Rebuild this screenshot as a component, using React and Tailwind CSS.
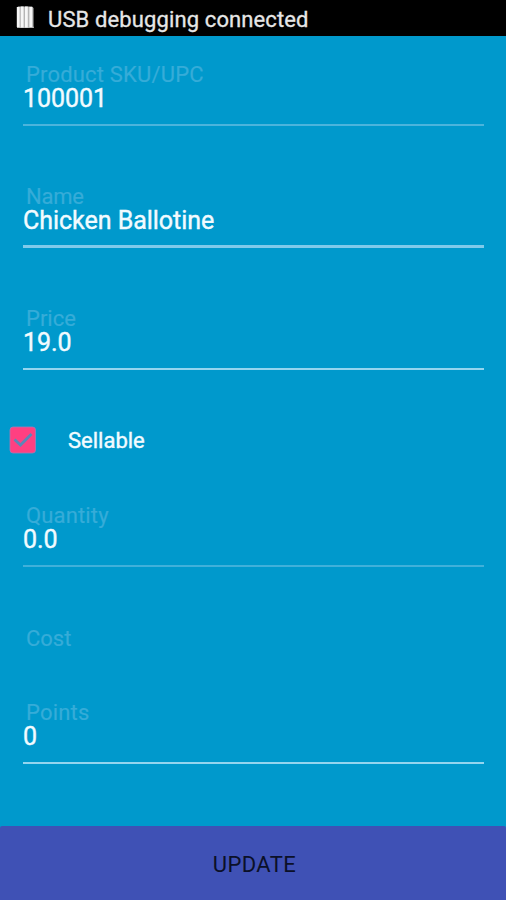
import React, { useState } from 'react';

const fields = [
  { name: 'sku', label: 'Product SKU/UPC', className: 'mt-[26px]', line: 'mt-[14px] h-[2px] bg-[#4bb4dc]', labelSize: 'tracking-[0.18px]' },
  { name: 'name', label: 'Name', className: 'mt-[58px]', line: 'mt-[13px] h-[3px] bg-[#80caea]', labelSize: 'tracking-[-0.2px]' },
  { name: 'price', label: 'Price', className: 'mt-[58px]', line: 'mt-[14px] h-[2px] bg-[#94d5ef]', labelSize: 'tracking-[0px]' },
];

const stockFields = [
  { name: 'quantity', label: 'Quantity', className: 'mt-[49px]', line: 'mt-[14px] h-[2px] bg-[#40b0da]', labelSize: 'tracking-[0.15px]' },
  { name: 'cost', label: 'Cost', className: 'mt-[59px]', labelSize: 'tracking-[0px]' },
  { name: 'points', label: 'Points', className: 'mt-[50px]', line: 'mt-[14px] h-[2px] bg-[#94d5ef]', labelSize: 'tracking-[0.2px]' },
];

const StatusBar = () => (
  <div className="flex h-9 shrink-0 items-center bg-black pl-4">
    <svg className="-mt-[2px] h-[24px] w-[20px] shrink-0" viewBox="0 0 20 24">
      <path d="M1 3 L2 1.5 H16 L17.5 3 V21 L18 23 H1 Z" fill="#b5b5b5" />
      <path d="M2.2 2V22M6.2 1.5V22.5M10.4 1.5V22.5M14.8 2V22" stroke="#f6f6f6" strokeWidth="2.8" />
    </svg>
    <span className="ml-[12px] mt-[3px] whitespace-nowrap text-[22px] leading-6 tracking-[0.12px] text-[#e6e6e6] [-webkit-text-stroke:0.3px]">
      USB debugging connected
    </span>
  </div>
);

const Field = ({ field, value, onChange }) => (
  <div className={`ml-[23px] mr-[22px] flex flex-col ${field.className}`}>
    <label htmlFor={field.name} className={`h-6 pl-[3px] pt-px text-[22px] leading-6 text-[#36acd8] [-webkit-text-stroke:0.2px] ${field.labelSize}`}>
      {field.label}
    </label>
    {field.line && (
      <>
        <input
          id={field.name}
          value={value}
          onChange={e => onChange(field.name, e.target.value)}
          className="h-6 w-full bg-transparent p-0 text-[25px] leading-6 tracking-[-0.03px] text-[#f2fbff] outline-none [-webkit-text-stroke:0.4px]"
        />
        <div className={field.line} />
      </>
    )}
  </div>
);

const App = () => {
  const [sellable, setSellable] = useState(true);
  const [product, setProduct] = useState({
    sku: '100001',
    name: 'Chicken Ballotine',
    price: '19.0',
    quantity: '0.0',
    points: '0',
  });

  const handleChange = (name, value) => {
    setProduct({ ...product, [name]: value });
  };

  return (
    <div className="flex h-[900px] w-[506px] flex-col overflow-hidden bg-[#0099cc] font-[Roboto,sans-serif]">
      <StatusBar />

      {fields.map(field => (
        <Field key={field.name} field={field} value={product[field.name]} onChange={handleChange} />
      ))}

      <button
        type="button"
        role="checkbox"
        aria-checked={sellable}
        onClick={() => setSellable(!sellable)}
        className="mt-[56px] flex h-[28px] items-center self-start pl-[9px]"
      >
        <svg className="h-[28px] w-[28px]" viewBox="0 0 28 28">
          <rect x="1" y="1" width="25.5" height="26" rx="3" fill="#ff4081" stroke="#a878b4" strokeWidth="0.8" />
          {sellable && <path d="M5.5 13.5 L11.5 19 L22.5 8" fill="none" stroke="#5b86b8" strokeWidth="2.8" />}
        </svg>
        <span className="ml-[31px] mt-[2px] text-[22px] leading-6 text-[#f2fbff] [-webkit-text-stroke:0.4px]">Sellable</span>
      </button>

      {stockFields.map(field => (
        <Field key={field.name} field={field} value={product[field.name]} onChange={handleChange} />
      ))}

      <button
        type="button"
        className="mt-auto flex h-[74px] w-full shrink-0 items-center justify-center rounded-t-[2px] bg-[#3f51b5] pl-[3px] pt-[2px] text-[22px] tracking-[0.4px] text-[#0b1028]"
      >
        UPDATE
      </button>
    </div>
  );
};

export default App;
